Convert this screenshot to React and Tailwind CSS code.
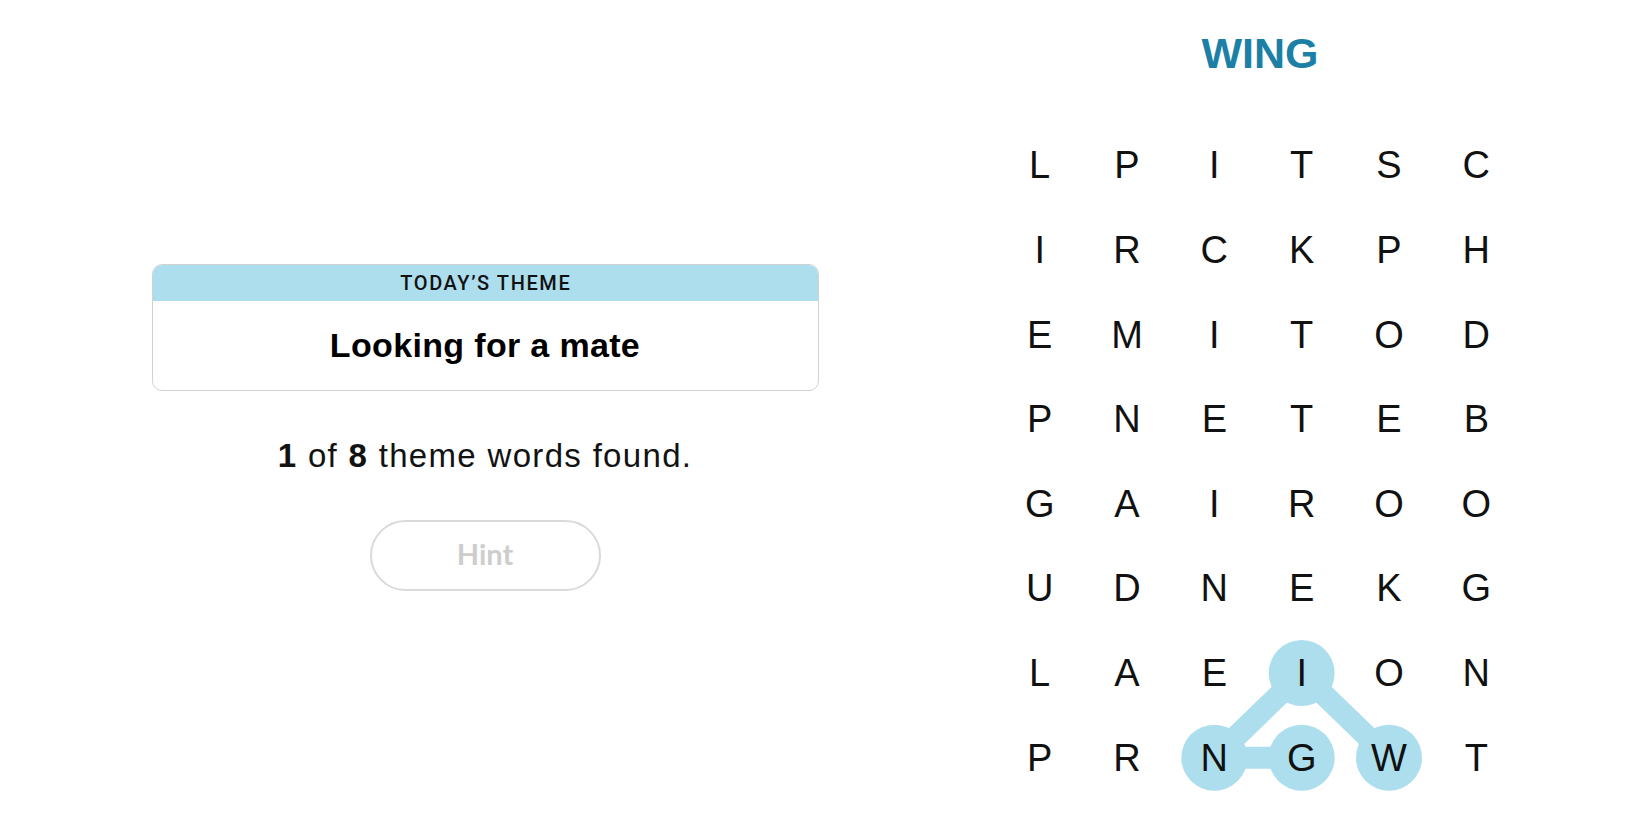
import React from 'react';

const letters = [
    ['L', 'P', 'I', 'T', 'S', 'C'],
    ['I', 'R', 'C', 'K', 'P', 'H'],
    ['E', 'M', 'I', 'T', 'O', 'D'],
    ['P', 'N', 'E', 'T', 'E', 'B'],
    ['G', 'A', 'I', 'R', 'O', 'O'],
    ['U', 'D', 'N', 'E', 'K', 'G'],
    ['L', 'A', 'E', 'I', 'O', 'N'],
    ['P', 'R', 'N', 'G', 'W', 'T'],
];

// cells of the word being spelled, in order of the path
const path = [[6, 3], [7, 2], [7, 3], [7, 4]];
const links = [[[7, 2], [7, 3]], [[7, 2], [6, 3]], [[6, 3], [7, 4]]];

const CW = 524 / 6;
const RH = 677 / 8;
const cx = (c) => CW / 2 + CW * c;
const cy = (r) => RH / 2 + RH * r;

function Board() {
    return (
        <div className="relative w-[524px] h-[677px] mt-[48px]">
            <svg className="absolute inset-0" width="524" height="677" viewBox="0 0 524 677">
                {links.map(([a, b], i) => (
                    <line key={i} x1={cx(a[1])} y1={cy(a[0])} x2={cx(b[1])} y2={cy(b[0])}
                        stroke="#addeed" strokeWidth="22" />
                ))}
                {path.map(([r, c]) => (
                    <circle key={`${r}-${c}`} cx={cx(c)} cy={cy(r)} r="33" fill="#addeed" />
                ))}
            </svg>
            <div className="relative grid grid-cols-6 grid-rows-8 w-full h-full">
                {letters.flat().map((ch, i) => (
                    <div key={i} className="flex items-center justify-center text-[38px] leading-none text-[#111]">
                        {ch}
                    </div>
                ))}
            </div>
        </div>
    );
}

export default function App() {
    return (
        <div className="w-[1650px] h-[825px] bg-white flex overflow-hidden" style={{ fontFamily: '"Liberation Sans", Arial, sans-serif' }}>
            <div className="w-[970px] flex flex-col items-center pt-[264px]">
                <div className="w-[667px] border border-[#d2d2d2] rounded-[10px] overflow-hidden">
                    <div className="h-[36px] bg-[#addeed] flex items-center justify-center">
                        <span className="text-[20px] font-medium tracking-[0.08em] text-[#121212] pl-[0.08em]" style={{ fontFamily: 'Roboto, sans-serif' }}>
                            TODAY’S THEME
                        </span>
                    </div>
                    <div className="h-[89px] flex items-center justify-center">
                        <span className="text-[34px] font-bold text-black tracking-[0.01em]">Looking for a mate</span>
                    </div>
                </div>
                <p className="mt-[45px] text-[33px] leading-[40px] text-[#121212] tracking-[0.04em]">
                    <b>1</b> of <b>8</b> theme words found.
                </p>
                <button className="mt-[44px] w-[231px] h-[71px] pb-[3px] rounded-full border-2 border-[#dadada] text-[29px] font-bold text-[#cdcdcd]" style={{ fontFamily: 'Lato, sans-serif' }}>
                    Hint
                </button>
            </div>
            <div className="w-[576px] flex flex-col items-center pt-[31px]">
                <h1 className="text-[43px] leading-[44px] font-bold text-[#1c7fa6] pl-[4px]">WING</h1>
                <Board />
            </div>
        </div>
    );
}
